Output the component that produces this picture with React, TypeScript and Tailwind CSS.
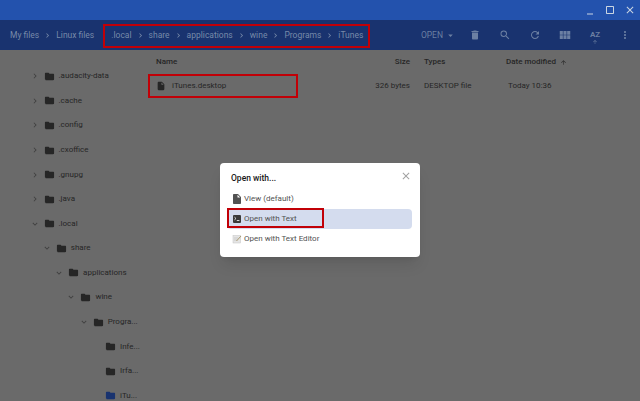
import type { ReactNode } from "react";
import { MdChevronRight, MdClose, MdDelete, MdExpandMore, MdFolder, MdInsertDriveFile, MdMoreVert, MdRefresh, MdSearch, MdArrowDropDown, MdViewModule, MdArrowUpward, MdMinimize, MdCropSquare } from "react-icons/md";

const crumbs = ["My files", "Linux files", ".local", "share", "applications", "wine", "Programs", "iTunes"];

const tree = [
  { name: ".audacity-data", depth: 0, open: false },
  { name: ".cache", depth: 0, open: false },
  { name: ".config", depth: 0, open: false },
  { name: ".cxoffice", depth: 0, open: false },
  { name: ".gnupg", depth: 0, open: false },
  { name: ".java", depth: 0, open: false },
  { name: ".local", depth: 0, open: true },
  { name: "share", depth: 1, open: true },
  { name: "applications", depth: 2, open: true },
  { name: "wine", depth: 3, open: true },
  { name: "Progra...", depth: 4, open: true },
  { name: "Infe...", depth: 5, leaf: true },
  { name: "Irfa...", depth: 5, leaf: true },
  { name: "iTu...", depth: 5, leaf: true, active: true },
];

const Slot = ({ children }: { children: ReactNode }) => (
  <div className="flex w-3.5 justify-center">{children}</div>
);

const TerminalIcon = () => (
  <svg viewBox="0 0 12 12" className="h-3 w-3">
    <rect x="2" y="2" width="8" height="8" rx="1" fill="#3a3a3a" />
    <path d="M3.5 4.2 5 5.5 3.5 6.8" stroke="#fff" strokeWidth="0.8" fill="none" />
    <path d="M5.8 7.5h2.6" stroke="#fff" strokeWidth="0.8" />
  </svg>
);

const EditorIcon = () => (
  <svg viewBox="0 0 12 12" className="h-3 w-3">
    <rect x="2" y="2.5" width="7.5" height="7.5" fill="#e4e4e4" stroke="#c4c4c4" strokeWidth="0.5" />
    <path d="M3 5h4M3 7h3" stroke="#b8b8b8" strokeWidth="0.6" />
    <path d="M5.5 8 10 3" stroke="#a89a70" strokeWidth="1" />
  </svg>
);

export default function App() {
  return (
    <div className="relative flex h-[401px] w-[640px] flex-col overflow-hidden bg-[#6a6a6a] text-[8px] text-neutral-800" style={{ fontFamily: "Roboto, sans-serif" }}>
      {/* title bar */}
      <div className="flex h-5 shrink-0 items-center justify-end gap-2 bg-[#2352ad] pr-1 text-slate-300">
        <MdMinimize size={12} />
        <MdCropSquare size={12} />
        <MdClose size={12} />
      </div>

      {/* toolbar */}
      <div className="flex h-[30px] shrink-0 items-center bg-[#19336f] pl-2.5 text-[8.5px] text-slate-400/80">
        {crumbs.map((c, i) => (
          <div key={c} className="flex items-center">
            {i > 0 &&
              (c === ".local" ? (
                <span className="w-[17px]" />
              ) : (
                <MdChevronRight size={9} className="mx-1" />
              ))}
            <span>{c}</span>
          </div>
        ))}
        <div className="ml-auto flex items-center gap-4 pr-2 text-slate-400/70">
          <span className="-mr-1 flex items-center gap-0.5">
            OPEN <MdArrowDropDown size={11} />
          </span>
          <Slot>
            <MdDelete size={12} />
          </Slot>
          <Slot>
            <MdSearch size={12} />
          </Slot>
          <Slot>
            <MdRefresh size={12} />
          </Slot>
          <Slot>
            <MdViewModule size={14} />
          </Slot>
          <span className="relative w-3.5 text-center text-[8px] font-bold">
            AZ
            <MdArrowUpward size={6} className="absolute -bottom-1 left-1" />
          </span>
          <Slot>
            <MdMoreVert size={12} />
          </Slot>
        </div>
      </div>

      {/* body */}
      <div className="flex min-h-0 flex-1">
        <aside className="flex h-[358px] w-36 shrink-0 flex-col pt-3.5">
          {tree.map((t) => (
            <div key={t.name} className="flex flex-1 items-center gap-1" style={{ paddingLeft: 29.5 + t.depth * 12.3 }}>
              {t.leaf ? (
                <span className="w-2.5" />
              ) : t.open ? (
                <MdExpandMore size={10} className="text-neutral-700" />
              ) : (
                <MdChevronRight size={10} className="text-neutral-700" />
              )}
              <MdFolder size={11} className={t.active ? "text-[#19336f]" : "text-neutral-800"} />
              <span className="whitespace-nowrap">{t.name}</span>
            </div>
          ))}
        </aside>

        <main className="flex-1 pl-3">
          <div className="flex h-6 items-center font-medium">
            <span className="flex-1">Name</span>
            <span className="w-16 text-right">Size</span>
            <span className="w-24 pl-3.5">Types</span>
            <span className="mr-1.5 flex w-32 items-center gap-1">
              Date modified <MdArrowUpward size={7} />
            </span>
          </div>
          <div className="flex h-6 items-center">
            <span className="flex flex-1 items-center gap-1.5">
              <MdInsertDriveFile size={10} /> iTunes.desktop
            </span>
            <span className="w-16 text-right">326 bytes</span>
            <span className="w-24 pl-3.5">DESKTOP file</span>
            <span className="mr-1.5 w-32 pl-0.5">Today 10:36</span>
          </div>
        </main>
      </div>

      {/* annotation boxes */}
      <div className="absolute left-[103px] top-6 h-6 w-[267px] border-2 border-red-700" />
      <div className="absolute left-[148px] top-[74px] h-6 w-[150px] border-2 border-red-700" />

      {/* dialog */}
      <div className="absolute left-[220px] top-[163px] w-[200px] rounded-sm bg-white pb-2 pl-[7px] pr-2 pt-2 text-neutral-600 shadow-lg">
        <div className="flex h-3.5 items-center justify-between pl-1">
          <span className="text-[8.5px] font-medium text-neutral-900">Open with...</span>
          <MdClose size={12} className="-mt-1 text-neutral-400" />
        </div>
        <div className="mt-1 flex flex-col">
          <div className="flex h-5 items-center gap-px pl-1">
            <MdInsertDriveFile size={12} /> View (default)
          </div>
          <div className="relative flex h-5 items-center gap-px rounded-sm bg-[#d4dcee] pl-1">
            <TerminalIcon /> Open with Text
            <div className="absolute -top-px left-0 h-5 w-[97px] border-2 border-red-700" />
          </div>
          <div className="flex h-5 items-center gap-px pl-1">
            <EditorIcon /> Open with Text Editor
          </div>
        </div>
      </div>
    </div>
  );
}
